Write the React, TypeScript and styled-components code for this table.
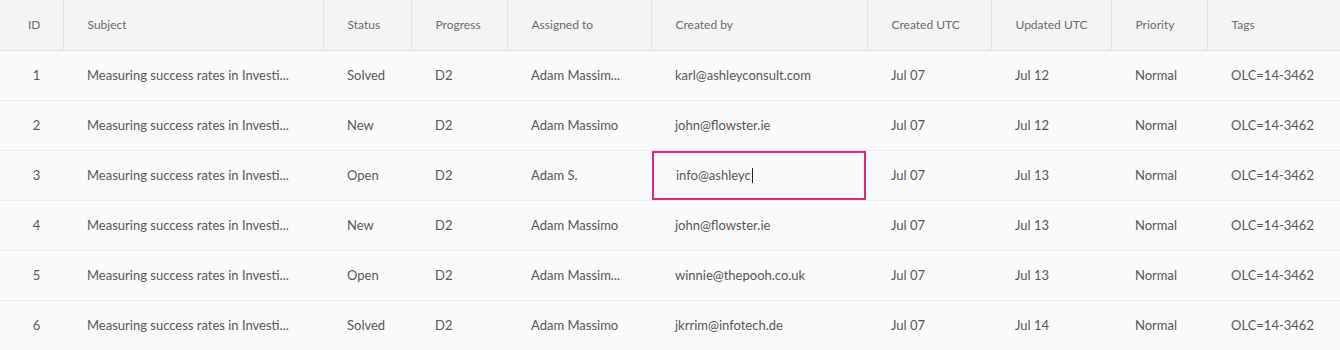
import styled, { createGlobalStyle } from "styled-components";

const GlobalStyle = createGlobalStyle`
  html, body {
    margin: 0;
    padding: 0;
    background: #fafafa;
  }
  body {
    font-family: Lato, "Liberation Sans", sans-serif;
  }
`;

type Column = {
  key: string;
  title: string;
  width: number;
  center?: boolean;
};

const columns: Column[] = [
  { key: "id", title: "ID", width: 63, center: true },
  { key: "subject", title: "Subject", width: 260 },
  { key: "status", title: "Status", width: 88 },
  { key: "progress", title: "Progress", width: 96 },
  { key: "assigned", title: "Assigned to", width: 144 },
  { key: "createdBy", title: "Created by", width: 216 },
  { key: "created", title: "Created UTC", width: 124 },
  { key: "updated", title: "Updated UTC", width: 120 },
  { key: "priority", title: "Priority", width: 96 },
  { key: "tags", title: "Tags", width: 133 },
];

type Ticket = {
  id: number;
  subject: string;
  status: string;
  progress: string;
  assigned: string;
  createdBy: string;
  created: string;
  updated: string;
  priority: string;
  tags: string;
};

const subject = "Measuring success rates in Investi...";

const tickets: Ticket[] = [
  { id: 1, subject, status: "Solved", progress: "D2", assigned: "Adam Massim...", createdBy: "karl@ashleyconsult.com", created: "Jul 07", updated: "Jul 12", priority: "Normal", tags: "OLC=14-3462" },
  { id: 2, subject, status: "New", progress: "D2", assigned: "Adam Massimo", createdBy: "john@flowster.ie", created: "Jul 07", updated: "Jul 12", priority: "Normal", tags: "OLC=14-3462" },
  { id: 3, subject, status: "Open", progress: "D2", assigned: "Adam S.", createdBy: "info@ashleyc", created: "Jul 07", updated: "Jul 13", priority: "Normal", tags: "OLC=14-3462" },
  { id: 4, subject, status: "New", progress: "D2", assigned: "Adam Massimo", createdBy: "john@flowster.ie", created: "Jul 07", updated: "Jul 13", priority: "Normal", tags: "OLC=14-3462" },
  { id: 5, subject, status: "Open", progress: "D2", assigned: "Adam Massim...", createdBy: "winnie@thepooh.co.uk", created: "Jul 07", updated: "Jul 13", priority: "Normal", tags: "OLC=14-3462" },
  { id: 6, subject, status: "Solved", progress: "D2", assigned: "Adam Massimo", createdBy: "jkrrim@infotech.de", created: "Jul 07", updated: "Jul 14", priority: "Normal", tags: "OLC=14-3462" },
];

const StyledTable = styled.table`
  width: 1340px;
  border-collapse: collapse;
  table-layout: fixed;
`;

const StyledHeadRow = styled.tr`
  background: #f4f4f4;
  height: 50px;
`;

const StyledHeadCell = styled.th<{ center?: boolean }>`
  box-sizing: border-box;
  padding: ${(props) => (props.center ? "0 0 0 6px" : "0 24px")};
  border-bottom: 1px solid #e2e2e2;
  border-right: 1px solid #e2e2e2;
  text-align: ${(props) => (props.center ? "center" : "left")};
  font-size: 12px;
  font-weight: 400;
  color: #6b6b6b;
  white-space: nowrap;
`;

const StyledRow = styled.tr`
  height: 50px;
  background: #fafafa;
`;

const StyledCell = styled.td<{ center?: boolean }>`
  box-sizing: border-box;
  padding: ${(props) => (props.center ? "0 0 0 10px" : "0 24px")};
  border-bottom: 1px solid #ececec;
  text-align: ${(props) => (props.center ? "center" : "left")};
  font-size: 13px;
  color: #585858;
  white-space: nowrap;
  overflow: hidden;
`;

const StyledEditingCell = styled.td`
  box-sizing: border-box;
  padding: 0 0 0 1px;
  border-bottom: 1px solid #ececec;
`;

const StyledEditor = styled.div`
  box-sizing: border-box;
  width: 214px;
  height: 49px;
  padding-left: 22px;
  border: 2px solid #e0277a;
  display: flex;
  align-items: center;
  font-size: 13px;
  color: #585858;
  background: #fafafa;
`;

const StyledCaret = styled.span`
  display: inline-block;
  width: 1px;
  height: 15px;
  background: #222222;
  margin-left: 1px;
`;

export default function App() {
  return (
    <>
      <GlobalStyle />
      <StyledTable>
        <colgroup>
          {columns.map((column) => (
            <col key={column.key} style={{ width: column.width }} />
          ))}
        </colgroup>
        <thead>
          <StyledHeadRow>
            {columns.map((column) => (
              <StyledHeadCell key={column.key} center={column.center}>
                {column.title}
              </StyledHeadCell>
            ))}
          </StyledHeadRow>
        </thead>
        <tbody>
          {tickets.map((ticket) => (
            <StyledRow key={ticket.id}>
              {columns.map((column) => {
                const value = ticket[column.key as keyof Ticket];
                if (ticket.id === 3 && column.key === "createdBy") {
                  return (
                    <StyledEditingCell key={column.key}>
                      <StyledEditor>
                        {value}
                        <StyledCaret />
                      </StyledEditor>
                    </StyledEditingCell>
                  );
                }
                return (
                  <StyledCell key={column.key} center={column.center}>
                    {value}
                  </StyledCell>
                );
              })}
            </StyledRow>
          ))}
        </tbody>
      </StyledTable>
    </>
  );
}
